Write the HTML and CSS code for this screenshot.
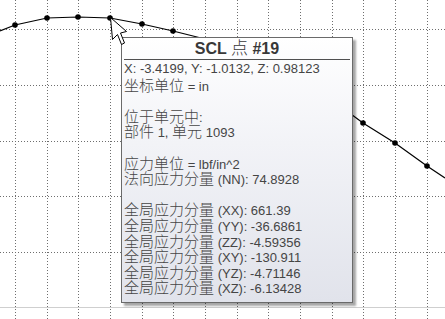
FILE: index.html
```html
<!DOCTYPE html>
<html>
<head>
<title>SCL Point</title>
<link rel="stylesheet" href="styles.css">
</head>
<body>

<div id="canvas">
    <svg id="plot" width="445" height="319" viewBox="0 0 445 319">
        <g class="grid">
            <line x1="15.5" y1="0" x2="15.5" y2="319"/>
            <line x1="47.5" y1="0" x2="47.5" y2="319"/>
            <line x1="78.5" y1="0" x2="78.5" y2="319"/>
            <line x1="110.5" y1="0" x2="110.5" y2="319"/>
            <line x1="142.5" y1="0" x2="142.5" y2="319"/>
            <line x1="173.5" y1="0" x2="173.5" y2="319"/>
            <line x1="205.5" y1="0" x2="205.5" y2="319"/>
            <line x1="237.5" y1="0" x2="237.5" y2="319"/>
            <line x1="268.5" y1="0" x2="268.5" y2="319"/>
            <line x1="300.5" y1="0" x2="300.5" y2="319"/>
            <line x1="332.5" y1="0" x2="332.5" y2="319"/>
            <line x1="363.5" y1="0" x2="363.5" y2="319"/>
            <line x1="395.5" y1="0" x2="395.5" y2="319"/>
            <line x1="427.5" y1="0" x2="427.5" y2="319"/>
            <line x1="0" y1="29.5" x2="445" y2="29.5"/>
            <line x1="0" y1="85.5" x2="445" y2="85.5"/>
            <line x1="0" y1="141.5" x2="445" y2="141.5"/>
            <line x1="0" y1="196.5" x2="445" y2="196.5"/>
            <line x1="0" y1="252.5" x2="445" y2="252.5"/>
        </g>
        <line class="edge" x1="0" y1="307.5" x2="445" y2="307.5"/>
        <polyline class="curve" points="0,31 15,25 47,18 78,17 110,18 142,24 173,31 205,39 237,48 268,60 300,78 332,100 363,123 395,143 427,166 445,178"/>
        <g class="pts">
            <circle cx="15" cy="25" r="2.8"/>
            <circle cx="47" cy="18" r="2.8"/>
            <circle cx="78" cy="17" r="2.8"/>
            <circle cx="110" cy="18" r="2.8"/>
            <circle cx="142" cy="24" r="2.8"/>
            <circle cx="173" cy="31" r="2.8"/>
            <circle cx="363" cy="123" r="2.8"/>
            <circle cx="395" cy="143" r="2.8"/>
            <circle cx="427" cy="166" r="2.8"/>
        </g>
    </svg>

    <div class="tip">
        <div class="tip-title">SCL <span class="zh">点</span> #19</div>
        <div class="tip-body">
            <div>X: -3.4199, Y: -1.0132, Z: 0.98123</div>
            <div><span class="zh">坐标单位</span> = in</div>
            <div></div>
            <div><span class="zh">位于单元中</span>:</div>
            <div><span class="zh">部件</span> 1, <span class="zh">单元</span> 1093</div>
            <div></div>
            <div><span class="zh">应力单位</span> = lbf/in^2</div>
            <div><span class="zh">法向应力分量</span> (NN): 74.8928</div>
            <div></div>
            <div><span class="zh">全局应力分量</span> (XX): 661.39</div>
            <div><span class="zh">全局应力分量</span> (YY): -36.6861</div>
            <div><span class="zh">全局应力分量</span> (ZZ): -4.59356</div>
            <div><span class="zh">全局应力分量</span> (XY): -130.911</div>
            <div><span class="zh">全局应力分量</span> (YZ): -4.71146</div>
            <div><span class="zh">全局应力分量</span> (XZ): -6.13428</div>
        </div>
    </div>

    <svg class="cursor" width="20" height="30" viewBox="0 0 20 30">
        <path d="M0.5,0.5 L2.5,22.5 L7.5,17.5 L11.5,27.5 L14.5,26 L10.5,16 L16.5,14.5 Z"/>
    </svg>
</div>

</body>
</html>
```
FILE: styles.css
```css
html, body {
    margin: 0;
    padding: 0;
    background: #ffffff;
}
#canvas {
    position: relative;
    width: 445px;
    height: 319px;
    overflow: hidden;
    background: #ffffff;
}
#plot {
    display: block;
}
.grid line {
    stroke: #6e6e6e;
    stroke-width: 1;
    stroke-dasharray: 1 2;
    shape-rendering: crispEdges;
}
.edge {
    stroke: #cfcfcf;
    stroke-width: 1;
    shape-rendering: crispEdges;
}
.curve {
    fill: none;
    stroke: #000000;
    stroke-width: 1.2;
}
.pts circle {
    fill: #000000;
}
/* tooltip over the plot */
.tip {
    position: absolute;
    left: 121px;
    top: 37px;
    width: 230px;
    height: 264px;
    border: 1px solid #6a6a6a;
    background: linear-gradient(to bottom, #ffffff 0%, #f2f3f7 40%, #e1e3eb 100%);
    box-shadow: 3px 3px 2px rgba(0, 0, 0, 0.35);
    font-family: "Liberation Sans", "Noto Sans CJK SC", sans-serif;
    color: #454545;
}
.tip-title {
    margin: 0 2px;
    height: 21px;
    line-height: 20px;
    border-bottom: 1px solid #505050;
    text-align: center;
    font-size: 16px;
    font-weight: bold;
    color: #383838;
}
.tip-title .zh {
    font-size: 17px;
}
.tip-body {
    padding: 1px 1px 0 2px;
    font-size: 13px;
    line-height: 15.6px;
    white-space: nowrap;
}
.tip-body > div {
    height: 15.6px;
}
.zh {
    font-family: "Noto Sans CJK SC", sans-serif;
    font-size: 15px;
    font-weight: 300;
    line-height: 1;
}
.cursor {
    position: absolute;
    left: 110px;
    top: 17px;
}
.cursor path {
    fill: #ffffff;
    stroke: #000000;
    stroke-width: 1;
    stroke-linejoin: miter;
}
```
